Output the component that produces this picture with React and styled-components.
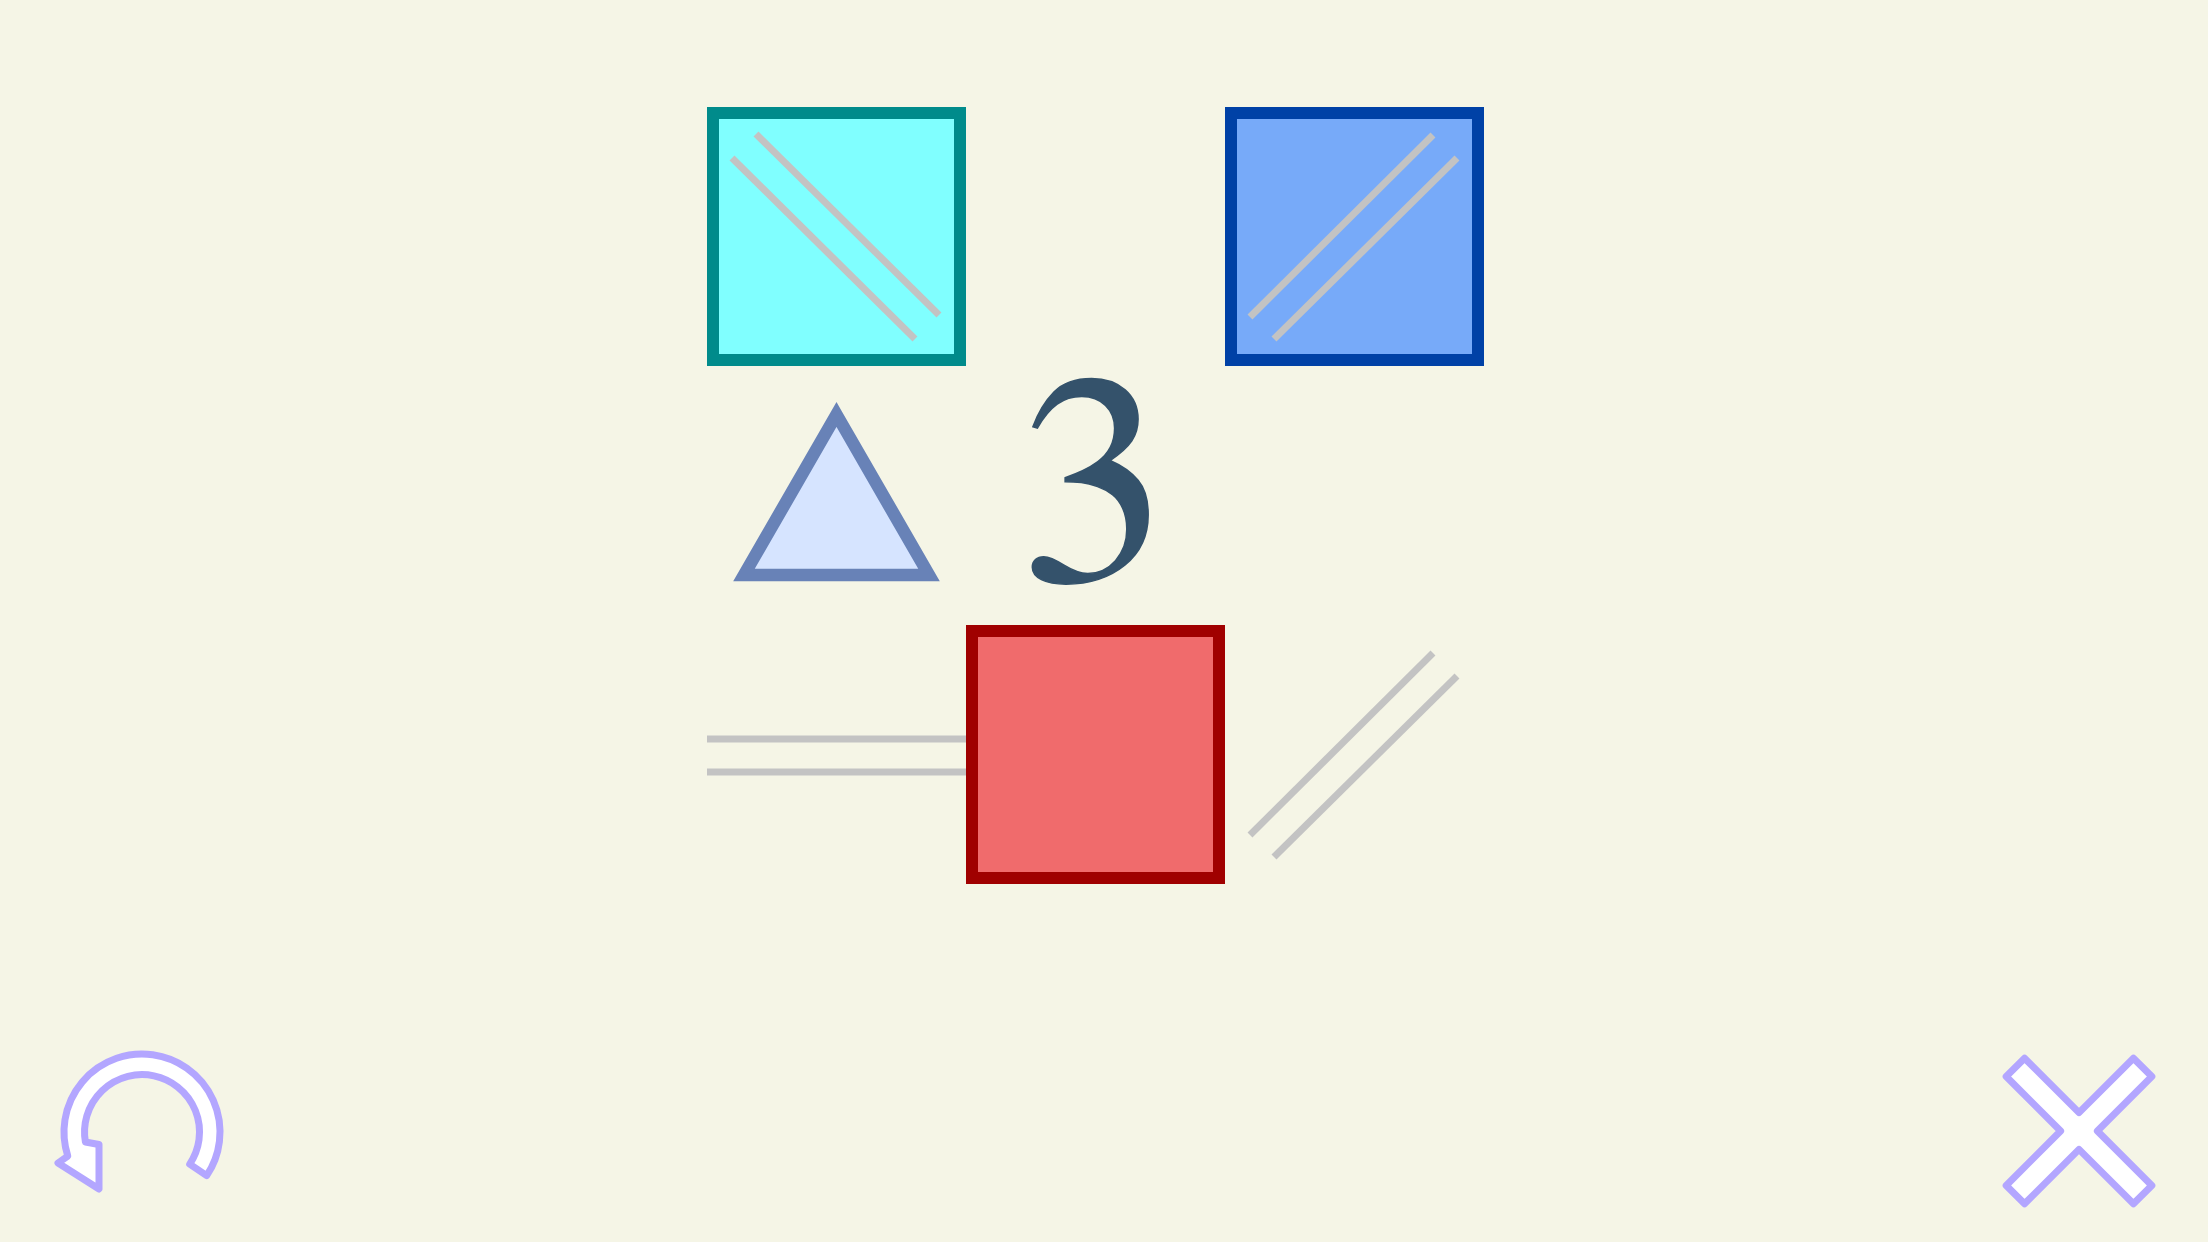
import React from "react";
import styled, { createGlobalStyle } from "styled-components";

const CELL = 259;

const GlobalStyle = createGlobalStyle`
   html, body {
      margin: 0;
      padding: 0;
      background: #f5f5e6;
   }
   body {
      font-family: "FreeSerif", "Liberation Serif", serif;
   }
`;

const Page = styled.div`
   display: flex;
   flex-direction: column;
   height: 100vh;
   overflow: hidden;
`;

const Board = styled.div`
   display: grid;
   grid-template-columns: repeat(3, ${CELL}px);
   grid-template-rows: repeat(3, ${CELL}px);
   margin: 107px 0 0 707px;
`;

const Cell = styled.div`
   width: ${CELL}px;
   height: ${CELL}px;
   display: flex;
   align-items: center;
   justify-content: center;
`;

const Square = styled.div`
   box-sizing: border-box;
   width: ${CELL}px;
   height: ${CELL}px;
   border: 12px solid ${({ $edge }) => $edge};
   background: ${({ $fill }) => $fill};
   svg {
      display: block;
   }
`;

const Digit = styled.div`
   font-family: "FreeSerif", "Liberation Serif", serif;
   font-size: 298px;
   line-height: 1;
   color: #34526b;
   padding: 0 3px 9px 0;
   -webkit-text-stroke: 1.5px #34526b;
`;

const Footer = styled.div`
   margin-top: auto;
   display: flex;
   justify-content: space-between;
   align-items: center;
   padding: 0 39px 21px 52px;
`;

const IconButton = styled.button`
   border: 0;
   padding: 0;
   background: none;
   width: 180px;
   height: 180px;
   cursor: pointer;
   svg {
      display: block;
   }
`;

const lineSets = {
   back: [
      [49, 27, 232, 208],
      [25, 51, 208, 232],
   ],
   fwd: [
      [25, 210, 208, 28],
      [49, 232, 232, 51],
   ],
   flat: [
      [0, 114, CELL, 114],
      [0, 147, CELL, 147],
   ],
};

// grey double strokes, drawn in cell coordinates
const Lines = ({ kind, inset = 0 }) => (
   <svg
      width={CELL - inset * 2}
      height={CELL - inset * 2}
      viewBox={`${inset} ${inset} ${CELL - inset * 2} ${CELL - inset * 2}`}
   >
      {lineSets[kind].map(([x1, y1, x2, y2], i) => (
         <line key={i} x1={x1} y1={y1} x2={x2} y2={y2} stroke="#c3c3c3" strokeWidth="7" />
      ))}
   </svg>
);

const Triangle = () => (
   <svg width={CELL} height={CELL} viewBox={`0 0 ${CELL} ${CELL}`}>
      <polygon
         points="129.5,48.5 222,209 37,209"
         fill="#d6e4ff"
         stroke="#6882b7"
         strokeWidth="12.5"
         strokeLinejoin="miter"
      />
   </svg>
);

const polar = (r, deg) => {
   const a = (deg * Math.PI) / 180;
   return [(r * Math.cos(a)).toFixed(1), (r * Math.sin(a)).toFixed(1)].join(",");
};

const UndoIcon = () => {
   const d = [
      `M${polar(57.5, 34)}`,
      `L${polar(78, 34)}`,
      `A78,78 0 1 0 ${polar(78, 162)}`,
      "L-84,31",
      "L-43,57",
      "L-43,12.5",
      `L${polar(57.5, 170)}`,
      `A57.5,57.5 0 1 1 ${polar(57.5, 34)}`,
      "Z",
   ].join(" ");
   return (
      <svg width="180" height="180" viewBox="0 0 180 180">
         <path
            transform="translate(90 91)"
            d={d}
            fill="#ffffff"
            stroke="#b3a6ff"
            strokeWidth="7"
            strokeLinejoin="round"
         />
      </svg>
   );
};

const CloseIcon = () => {
   const h = 13;
   const L = 90;
   const pts = [
      [-h, -L], [h, -L], [h, -h], [L, -h], [L, h], [h, h],
      [h, L], [-h, L], [-h, h], [-L, h], [-L, -h], [-h, -h],
   ];
   return (
      <svg width="180" height="180" viewBox="0 0 180 180">
         <polygon
            transform="translate(90 90) rotate(45)"
            points={pts.map(p => p.join(",")).join(" ")}
            fill="#ffffff"
            stroke="#b3a6ff"
            strokeWidth="7"
            strokeLinejoin="round"
         />
      </svg>
   );
};

export default function App() {
   return (
      <Page>
         <GlobalStyle />
         <Board>
            <Cell>
               <Square $edge="#008b8b" $fill="#80ffff">
                  <Lines kind="back" inset={12} />
               </Square>
            </Cell>
            <Cell />
            <Cell>
               <Square $edge="#0041a6" $fill="#77aaf9">
                  <Lines kind="fwd" inset={12} />
               </Square>
            </Cell>

            <Cell>
               <Triangle />
            </Cell>
            <Cell>
               <Digit>3</Digit>
            </Cell>
            <Cell />

            <Cell>
               <Lines kind="flat" />
            </Cell>
            <Cell>
               <Square $edge="#a00000" $fill="#f06b6c" />
            </Cell>
            <Cell>
               <Lines kind="fwd" />
            </Cell>
         </Board>
         <Footer>
            <IconButton aria-label="undo">
               <UndoIcon />
            </IconButton>
            <IconButton aria-label="close">
               <CloseIcon />
            </IconButton>
         </Footer>
      </Page>
   );
}
